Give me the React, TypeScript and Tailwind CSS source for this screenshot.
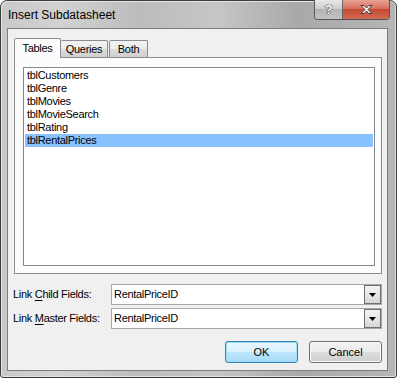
import { useState } from "react";

const tables = [
  "tblCustomers",
  "tblGenre",
  "tblMovies",
  "tblMovieSearch",
  "tblRating",
  "tblRentalPrices",
];

const ComboBox = ({ value }: { value: string }) => (
  <div className="w-[271px] h-[21px] border border-[#a6a8ad] bg-white flex items-stretch">
    <div className="flex-1 flex items-center pl-[2px] text-black">{value}</div>
    <div className="w-[17px] border border-[#6f6f6f] bg-[linear-gradient(#f4f4f4,#e6e6e6_50%,#d6d6d6)] flex items-center justify-center">
      <svg width="7" height="4" viewBox="0 0 7 4">
        <path d="M0 0h7L3.5 4z" fill="#000" />
      </svg>
    </div>
  </div>
);

const Label = ({ pre, key_, post }: { pre: string; key_: string; post: string }) => (
  <span className="w-[98px] text-black">
    {pre}
    <span className="underline underline-offset-[2px]">{key_}</span>
    {post}
  </span>
);

export default function App() {
  const [selected, setSelected] = useState(5);
  const [tab] = useState("Tables");

  return (
    <div className="w-[397px] h-[378px] flex flex-col rounded-t-[7px] rounded-b-[3px] border border-[#3e3e3e] bg-[linear-gradient(90deg,#c9c9c9,#d2d2d2_15%,#bcbcbc_35%,#c6c6c6_55%,#a9a9a9_75%,#b5b5b5)] shadow-[inset_1px_1px_0_#e4e4e4,inset_-1px_-1px_0_#e0e0e0] font-['Liberation_Sans',Arial,sans-serif] text-[11px] tracking-[-0.3px] leading-[13px] select-none">
      {/* Title bar */}
      <div className="h-[27px] flex items-start">
        <span className="ml-[7px] mt-[7px] text-[12px] tracking-normal leading-[15px] text-black">
          Insert Subdatasheet
        </span>
        <div className="ml-auto mr-[6px] -mt-px flex h-[20px] rounded-b-[4px] border border-t-0 border-[#555] overflow-hidden">
          <div className="w-[28px] h-full border-r border-[#666] bg-[linear-gradient(#e6e6e6,#cfcfcf_45%,#b3b3b3_50%,#c4c4c4)] flex items-center justify-center">
            <span className="text-white font-bold text-[13px] leading-none [text-shadow:0_0_1px_#333,0_0_1px_#333,0_0_1px_#333]">
              ?
            </span>
          </div>
          <div className="w-[46px] h-full bg-[linear-gradient(#e8a293,#d8715f_45%,#c74a33_50%,#d06a52)] flex items-center justify-center">
            <svg width="15" height="11" viewBox="0 0 15 11">
              <path
                d="M2 1.5h3l2.5 2.5 2.5-2.5h3l-4 4 4 4h-3L7.5 7 5 9.5H2l4-4z"
                fill="#fff"
                stroke="#3a3a3a"
                strokeWidth="1"
                strokeLinejoin="round"
              />
            </svg>
          </div>
        </div>
      </div>

      {/* Client area */}
      <div className="ml-[6px] mr-[8px] mb-[6px] h-[343px] border border-[#7c7c7c] bg-[#f0f0f0] flex flex-col pt-[9px] pl-[6px] pr-[5px]">
        {/* Tabs */}
        <div className="h-[19px] flex items-end">
          {["Tables", "Queries", "Both"].map((t, i) =>
            t === tab ? (
              <div
                key={t}
                className="relative z-10 -mb-px w-[47px] h-[20px] border border-b-0 border-[#898c95] bg-[#fcfcfc] flex justify-center pt-[3px] rounded-t-[2px]"
              >
                {t}
              </div>
            ) : (
              <div
                key={t}
                className={`${i === 2 ? "ml-[1px] w-[39px]" : "w-[47px]"} h-[17px] border border-b-0 ${i === 1 ? "border-l-0" : ""} border-[#898c95] bg-[linear-gradient(#f3f3f3,#ebebeb_50%,#dddddd_50%,#cfcfcf)] flex justify-center pt-[2px] rounded-t-[2px]`}
              >
                {t}
              </div>
            ),
          )}
        </div>

        {/* Tab panel */}
        <div className="h-[217px] border border-[#898c95] bg-[#fcfcfc] pt-[9px] pl-[8px] pr-[6px]">
          <div className="h-[199px] border border-[#828790] bg-white p-px">
            {tables.map((t, i) => (
              <div
                key={t}
                onClick={() => setSelected(i)}
                className={`h-[13px] pl-[2px] text-black ${i === selected ? "bg-[#8ac2ff]" : ""}`}
              >
                {t}
              </div>
            ))}
          </div>
        </div>

        {/* Link fields */}
        <div className="mt-[10px] flex items-center pl-[-1px] -ml-px">
          <Label pre="Link " key_="C" post="hild Fields:" />
          <ComboBox value="RentalPriceID" />
        </div>
        <div className="mt-[3px] flex items-center -ml-px">
          <Label pre="Link " key_="M" post="aster Fields:" />
          <ComboBox value="RentalPriceID" />
        </div>

        {/* Buttons */}
        <div className="mt-[12px] flex justify-end gap-[11px]">
          <button className="w-[73px] h-[22px] rounded-[3px] border border-[#3c7fb1] bg-[linear-gradient(#eaf6fd,#d9f0fc_50%,#bee6fd_50%,#a7d9f5)] shadow-[inset_0_0_0_1px_#98e0f7] text-black tracking-normal">
            OK
          </button>
          <button className="w-[73px] h-[22px] rounded-[3px] border border-[#707070] bg-[linear-gradient(#f2f2f2,#ebebeb_50%,#dddddd_50%,#cfcfcf)] shadow-[inset_0_0_0_1px_#fbfbfb] text-black tracking-normal">
            Cancel
          </button>
        </div>
      </div>
    </div>
  );
}
